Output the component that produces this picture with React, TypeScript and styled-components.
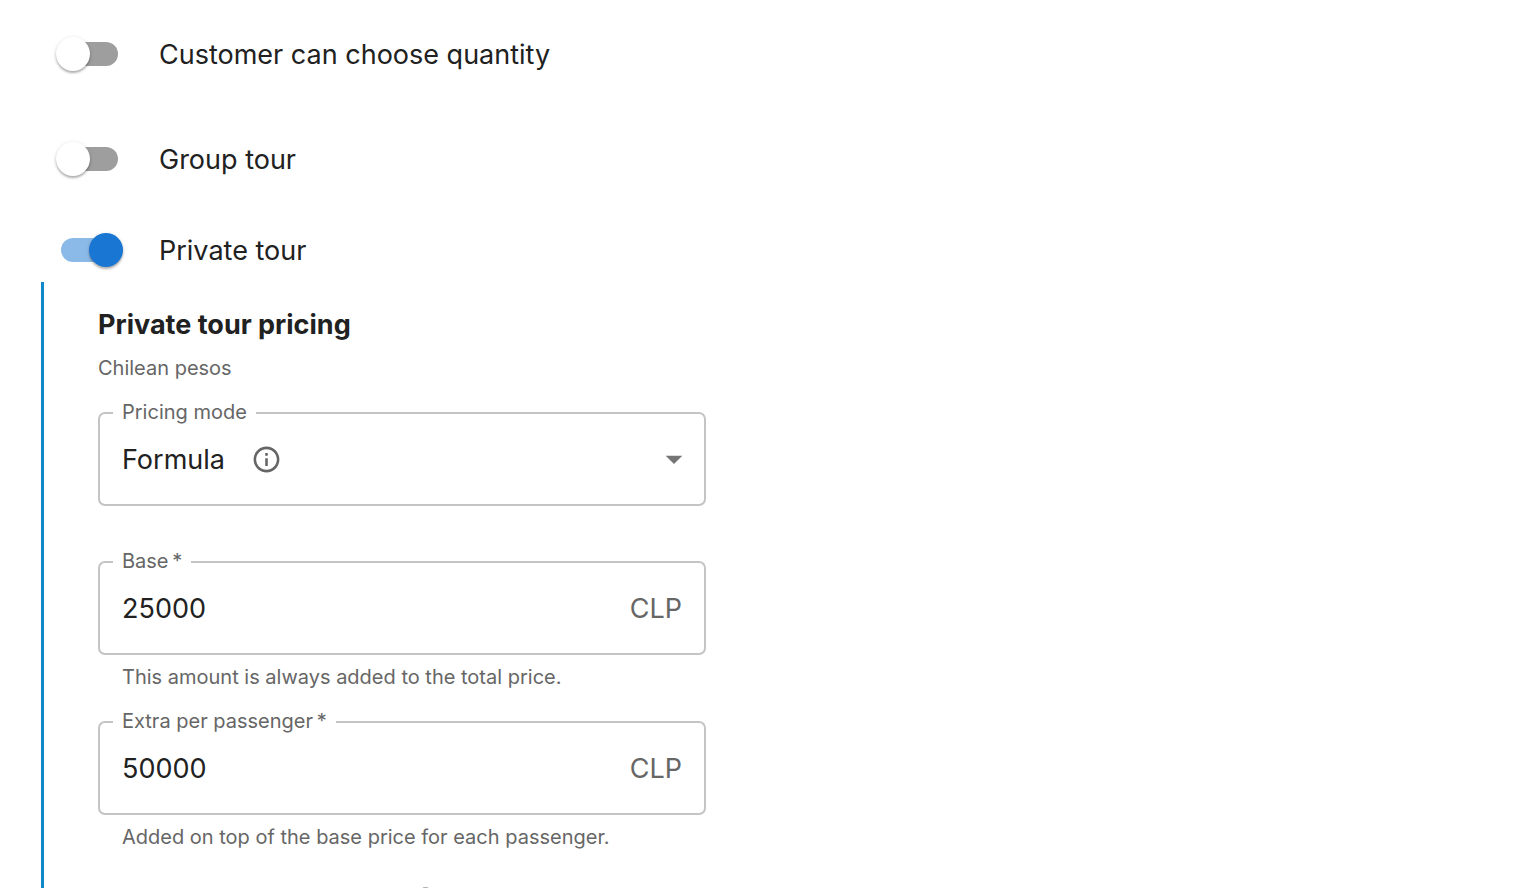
import React, { useId, useState } from "react";
import styled, { createGlobalStyle } from "styled-components";

const GlobalStyle = createGlobalStyle`
  *, *::before, *::after { box-sizing: border-box; }
  body {
    margin: 0;
    background: #fff;
    color: #212121;
    font-family: Inter, "Liberation Sans", sans-serif;
    font-size: 27px;
  }
`;

const Page = styled.main`
  display: flex;
  flex-direction: column;
  height: 100vh;
  overflow: hidden;
  padding: 22px 40px 0 41px;
`;

const ToggleRow = styled.label<{ $gap: number }>`
  display: flex;
  align-items: center;
  flex: none;
  align-self: flex-start;
  gap: 36px;
  height: 64px;
  margin-bottom: ${(p) => p.$gap}px;
  padding-left: 15px;
  cursor: pointer;
`;

const Switch = styled.input`
  appearance: none;
  display: grid;
  align-items: center;
  width: 67px;
  height: 34px;
  margin: 0;
  cursor: pointer;

  &::before,
  &::after {
    content: "";
    grid-area: 1 / 1;
  }
  &::before {
    height: 24px;
    margin: 0 5px;
    border-radius: 12px;
    background: #9e9e9e;
  }
  &::after {
    justify-self: start;
    width: 34px;
    height: 34px;
    border-radius: 50%;
    background: #fff;
    box-shadow: 0 2px 2px rgba(0, 0, 0, 0.24), 0 1px 4px rgba(0, 0, 0, 0.14);
  }
  &:checked::before { background: #8cbae8; }
  &:checked::after {
    justify-self: end;
    background: #1976d2;
  }
`;

const Panel = styled.section`
  flex: 1 0 auto;
  padding: 22px 0 0 54px;
  border-left: 3px solid #0f87cb;
`;

const Form = styled.form`
  display: flex;
  flex-direction: column;
  width: 100%;
  max-width: 608px;
`;

const Title = styled.h2`
  margin: 0;
  font-size: 27px;
  font-weight: 700;
  line-height: 42px;
`;

const Note = styled.p<{ $indent?: boolean }>`
  margin: 5px 0 16px;
  padding-left: ${(p) => (p.$indent ? 24 : 0)}px;
  color: #666;
  font-size: 20px;
  line-height: 34px;
`;

const Outline = styled.fieldset<{ $gap?: number }>`
  min-width: 0;
  margin: 0 0 ${(p) => p.$gap ?? 0}px;
  padding: 0 0 11px;
  border: 2px solid #c4c4c4;
  border-radius: 7px;
`;

const Legend = styled.legend`
  margin-left: 13px;
  padding: 0 9px 2px;
  color: #666;
  font-size: 20px;
  line-height: 22px;
`;

const FieldRow = styled.div`
  display: flex;
  align-items: center;
  height: 68px;
  padding: 0 22px;
`;

const Amount = styled.input`
  flex: 1;
  min-width: 0;
  height: 100%;
  padding: 0;
  border: 0;
  outline: 0;
  background: none;
  color: inherit;
  font: inherit;
`;

const Unit = styled.span`
  color: #666;
`;

const SelectRow = styled.div`
  display: grid;
  height: 68px;
`;

const Select = styled.select`
  appearance: none;
  grid-area: 1 / 1;
  padding: 0 22px;
  border: 0;
  outline: 0;
  background: none;
  color: inherit;
  font: inherit;
`;

const SelectIcons = styled.div`
  grid-area: 1 / 1;
  display: flex;
  align-items: center;
  justify-content: space-between;
  padding: 0 10px 0 151px;
  color: #757575;
  pointer-events: none;
`;

const InfoButton = styled.button`
  display: flex;
  padding: 0;
  border: 0;
  background: none;
  color: #666;
  pointer-events: auto;
  cursor: pointer;
`;

const NextRow = styled.div`
  display: flex;
  justify-content: center;
  padding: 15px 0 0 47px;
`;

function Info() {
  return (
    <InfoButton type="button" aria-label="More information">
      <svg width="31" height="31" viewBox="0 0 24 24" fill="currentColor" aria-hidden="true">
        <path d="M11 7h2v2h-2zm0 4h2v6h-2zm1-9C6.48 2 2 6.48 2 12s4.48 10 10 10 10-4.48 10-10S17.52 2 12 2m0 18c-4.41 0-8-3.59-8-8s3.59-8 8-8 8 3.59 8 8-3.59 8-8 8" />
      </svg>
    </InfoButton>
  );
}

function Toggle({ label, on = false, gap = 0 }: { label: string; on?: boolean; gap?: number }) {
  const [checked, setChecked] = useState(on);
  return (
    <ToggleRow $gap={gap}>
      <Switch
        type="checkbox"
        role="switch"
        checked={checked}
        onChange={(e) => setChecked(e.target.checked)}
      />
      <span>{label}</span>
    </ToggleRow>
  );
}

function AmountField({ label, initial, help }: { label: string; initial: string; help: string }) {
  const id = useId();
  const [value, setValue] = useState(initial);
  return (
    <>
      <Outline>
        <Legend>
          <label htmlFor={id}>{label}&thinsp;*</label>
        </Legend>
        <FieldRow>
          <Amount
            id={id}
            inputMode="numeric"
            required
            value={value}
            aria-describedby={`${id}-help`}
            onChange={(e) => setValue(e.target.value)}
          />
          <Unit>CLP</Unit>
        </FieldRow>
      </Outline>
      <Note $indent id={`${id}-help`}>{help}</Note>
    </>
  );
}

export default function App() {
  return (
    <>
      <GlobalStyle />
      <Page>
        <Toggle label="Customer can choose quantity" gap={41} />
        <Toggle label="Group tour" gap={27} />
        <Toggle label="Private tour" on />
        <Panel>
          <Form>
            <Title>Private tour pricing</Title>
            <Note>Chilean pesos</Note>
            <Outline $gap={44}>
              <Legend>
                <label htmlFor="pricing-mode">Pricing mode</label>
              </Legend>
              <SelectRow>
                <Select id="pricing-mode" defaultValue="formula">
                  <option value="formula">Formula</option>
                </Select>
                <SelectIcons>
                  <Info />
                  <svg width="40" height="40" viewBox="0 0 24 24" fill="currentColor" aria-hidden="true">
                    <path d="M7 10l5 5 5-5z" />
                  </svg>
                </SelectIcons>
              </SelectRow>
            </Outline>
            <AmountField
              label="Base"
              initial="25000"
              help="This amount is always added to the total price."
            />
            <AmountField
              label="Extra per passenger"
              initial="50000"
              help="Added on top of the base price for each passenger."
            />
            <NextRow>
              <Info />
            </NextRow>
          </Form>
        </Panel>
      </Page>
    </>
  );
}
